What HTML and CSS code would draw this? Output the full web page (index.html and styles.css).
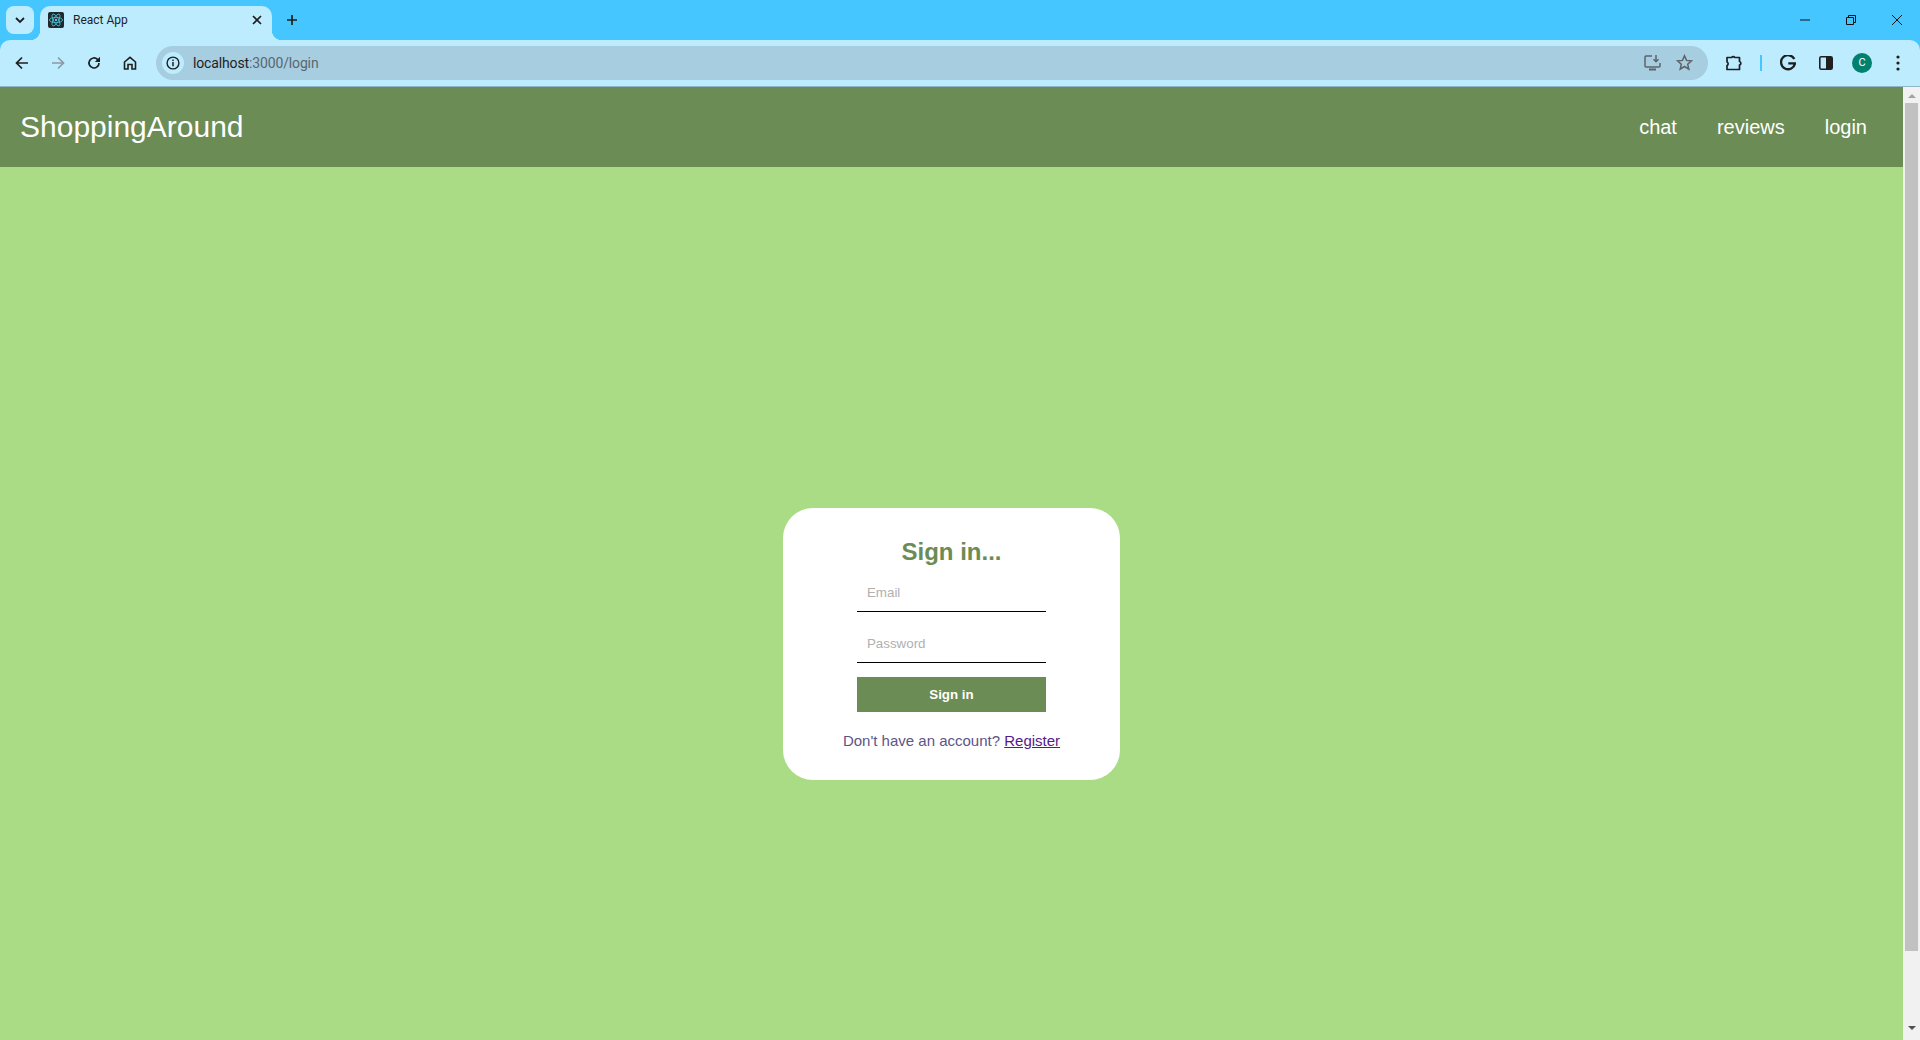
FILE: index.html
```html
<!DOCTYPE html>
<html lang="en">
  <head>
    <meta charset="UTF-8" />
    <meta name="viewport" content="width=device-width, initial-scale=1.0" />
    <title>React App</title>
    <link rel="stylesheet" href="styles.css">
  </head>
  <body>
    <!-- browser tab strip -->
    <div class="tabstrip">
      <div class="tab-search">
        <svg width="12" height="12" viewBox="0 0 12 12"><path d="M2 4l4 4 4-4" fill="none" stroke="#1f1f1f" stroke-width="1.8"/></svg>
      </div>
      <div class="tab">
        <span class="favicon">
          <svg width="16" height="16" viewBox="0 0 16 16">
            <rect width="16" height="16" rx="2" fill="#20282c"/>
            <g fill="none" stroke="#4fc6e0" stroke-width=".8">
              <ellipse cx="8" cy="8" rx="6.6" ry="2.6"/>
              <ellipse cx="8" cy="8" rx="6.6" ry="2.6" transform="rotate(60 8 8)"/>
              <ellipse cx="8" cy="8" rx="6.6" ry="2.6" transform="rotate(120 8 8)"/>
            </g>
            <circle cx="8" cy="8" r="1.3" fill="#4fc6e0"/>
          </svg>
        </span>
        <span class="tab-title">React App</span>
        <svg class="tab-close" width="10" height="10" viewBox="0 0 10 10"><path d="M1 1l8 8M9 1l-8 8" stroke="#1f1f1f" stroke-width="1.7"/></svg>
      </div>
      <svg class="new-tab" width="12" height="12" viewBox="0 0 12 12"><path d="M6 1v10M1 6h10" stroke="#1f1f1f" stroke-width="1.7"/></svg>
      <div class="window-controls">
        <svg width="10" height="10" viewBox="0 0 10 10"><path d="M0 5h10" stroke="#111" stroke-width="1"/></svg>
        <svg width="10" height="10" viewBox="0 0 10 10"><path d="M.5 2.5h7v7h-7zM2.5 2.5v-2h7v7h-2" fill="none" stroke="#111" stroke-width="1"/></svg>
        <svg width="10" height="10" viewBox="0 0 10 10"><path d="M0 0l10 10M10 0l-10 10" stroke="#111" stroke-width="1"/></svg>
      </div>
    </div>

    <!-- browser toolbar -->
    <div class="toolbar">
      <div class="nav-icons">
        <svg width="14" height="14" viewBox="0 0 14 14"><path d="M13 7H2M7 1.5L1.5 7 7 12.5" fill="none" stroke="#1f1f1f" stroke-width="1.7"/></svg>
        <svg width="14" height="14" viewBox="0 0 14 14"><path d="M1 7h11M7 1.5L12.5 7 7 12.5" fill="none" stroke="#8a9aa5" stroke-width="1.7"/></svg>
        <svg width="14" height="14" viewBox="0 0 14 14"><path d="M12 7a5 5 0 1 1-1.5-3.6L12.5 5" fill="none" stroke="#1f1f1f" stroke-width="1.7"/><path d="M13 .8V6H7.8z" fill="#1f1f1f"/></svg>
        <svg width="14" height="14" viewBox="0 0 14 14"><path d="M1.5 13V6L7 1.3 12.5 6v7H9V8.5H5V13z" fill="none" stroke="#1f1f1f" stroke-width="1.6"/></svg>
      </div>
      <div class="address-bar">
        <span class="site-info">
          <svg width="14" height="14" viewBox="0 0 14 14"><circle cx="7" cy="7" r="5.9" fill="none" stroke="#1f1f1f" stroke-width="1.4"/><path d="M7 6v4.2M7 3.6v1.4" stroke="#1f1f1f" stroke-width="1.5"/></svg>
        </span>
        <span class="url"><span class="url-host">localhost</span>:3000/login</span>
        <svg class="bar-icon" width="17" height="17" viewBox="0 0 17 17"><path d="M8 2H2a1 1 0 0 0-1 1v9a1 1 0 0 0 1 1h13a1 1 0 0 0 1-1V9" fill="none" stroke="#5f6368" stroke-width="1.5"/><path d="M12 1v6.5M9.5 5.2L12 7.7l2.5-2.5" fill="none" stroke="#5f6368" stroke-width="1.5"/><path d="M5 15.5h7" stroke="#5f6368" stroke-width="2"/></svg>
        <svg class="bar-icon" width="17" height="17" viewBox="0 0 17 17"><path d="M8.5 1.8l2 4.6 5 .5-3.8 3.3 1.1 4.9-4.3-2.6-4.3 2.6 1.1-4.9L1.500 6.900l5-.5z" fill="none" stroke="#5f6368" stroke-width="1.5"/></svg>
      </div>
      <div class="toolbar-actions">
        <svg class="icon-extensions" width="18" height="18" viewBox="0 0 18 18"><path d="M2 3.500h4.700a1.900 1.900 0 0 1 3.100 0h4.700v4a1.800 1.800 0 0 1 0 3.500v4.500H2v-4c1.500-.5 1.500-3 0-3.500z" fill="none" stroke="#1f1f1f" stroke-width="1.700" stroke-linejoin="round"/></svg>
        <span class="toolbar-sep"></span>
        <svg class="icon-google" width="16" height="16" viewBox="0 0 16 16"><path d="M14.300 4A7 7 0 1 0 15 8.300H8.300" fill="none" stroke="#1f1f1f" stroke-width="2.300"/></svg>
        <svg class="icon-panel" width="14" height="14" viewBox="0 0 14 14"><rect x=".8" y=".8" width="12.400" height="12.400" rx="1.500" fill="none" stroke="#1f1f1f" stroke-width="1.600"/><rect x="7" y="1" width="6" height="12" fill="#1f1f1f"/></svg>
        <span class="avatar">C</span>
        <svg width="4" height="16" viewBox="0 0 4 16"><circle cx="2" cy="2" r="1.600" fill="#1f1f1f"/><circle cx="2" cy="8" r="1.600" fill="#1f1f1f"/><circle cx="2" cy="14" r="1.600" fill="#1f1f1f"/></svg>
      </div>
    </div>

    <div class="viewport">
      <div class="page">
        <nav class="navbar">
          <a class="brand" href="#">ShoppingAround</a>
          <div class="nav-links">
            <a href="#">chat</a>
            <a href="#">reviews</a>
            <a href="#">login</a>
          </div>
        </nav>

        <main class="main">
          <form class="login-card">
            <h2>Sign in...</h2>
            <input type="email" placeholder="Email" />
            <input type="password" placeholder="Password" />
            <button type="button">Sign in</button>
            <p class="register-text">Don't have an account? <a href="#">Register</a></p>
          </form>
        </main>
      </div>

      <div class="scrollbar">
        <span class="arrow-up"></span>
        <div class="thumb"></div>
        <span class="arrow-down"></span>
      </div>
    </div>
  </body>
</html>
```

FILE: styles.css
```css
* {
  box-sizing: border-box;
}

html,
body {
  height: 100%;
}

body {
  margin: 0;
  display: flex;
  flex-direction: column;
  overflow: hidden;
  font-family: "Liberation Sans", Arial, sans-serif;
  background-color: #46c6ff;
}

/* Browser chrome */
.tabstrip {
  height: 40px;
  flex: none;
  display: flex;
  align-items: flex-start;
  padding: 6px 0 0 6px;
}

.tab-search {
  width: 28px;
  height: 28px;
  margin-right: 6px;
  display: flex;
  align-items: center;
  justify-content: center;
  border-radius: 8px;
  background-color: #bdecff;
}

.tab {
  width: 232px;
  height: 34px;
  display: flex;
  align-items: center;
  padding: 0 10px 6px 8px;
  border-radius: 10px 10px 0 0;
  background-color: #bdecff;
  position: relative;
}

/* the little flares at the tab's bottom corners */
.tab::after {
  content: "";
  position: absolute;
  right: -10px;
  bottom: 0;
  width: 10px;
  height: 10px;
  background: radial-gradient(circle at 100% 0, transparent 10px, #bdecff 10.500px);
}

.tab::before {
  content: "";
  position: absolute;
  left: -10px;
  bottom: 0;
  width: 10px;
  height: 10px;
  background: radial-gradient(circle at 0 0, transparent 10px, #bdecff 10.500px);
}

.favicon {
  display: flex;
  margin-right: 9px;
}

.tab-title {
  flex: 1;
  font-family: Roboto, sans-serif;
  font-size: 12px;
  color: #1f1f1f;
}

.new-tab {
  margin: 8px 0 0 14px;
}

.window-controls {
  margin-left: auto;
  display: flex;
  gap: 36px;
  padding: 9px 18px 0 0;
}

.toolbar {
  height: 47px;
  flex: none;
  display: flex;
  align-items: center;
  padding: 0 0 1px 0;
  border-bottom: 1px solid #8fb5c9;
  border-radius: 10px 10px 0 0;
  background-color: #bdecff;
}

.nav-icons {
  display: flex;
  gap: 22px;
  width: 156px;
  padding-left: 15px;
}

.address-bar {
  width: 1552px;
  height: 34px;
  display: flex;
  align-items: center;
  padding: 0 15px 0 6px;
  border-radius: 17px;
  background-color: #a6cde0;
}

.site-info {
  width: 22px;
  height: 22px;
  margin-right: 9px;
  display: flex;
  align-items: center;
  justify-content: center;
  border-radius: 50%;
  background-color: #bdecff;
}

.url {
  flex: 1;
  font-family: Roboto, sans-serif;
  font-size: 14px;
  letter-spacing: -0.14px;
  color: #5b6670;
}

.url-host {
  color: #1f1f1f;
}

.bar-icon {
  margin-left: 15px;
}

.toolbar-actions {
  flex: 1;
  display: flex;
  align-items: center;
  padding-left: 17px;
}

.toolbar-sep {
  width: 2px;
  height: 16px;
  margin: 0 18px 0 17px;
  background-color: #46c6ff;
}

.icon-google {
  margin-right: 23px;
}

.avatar {
  width: 20px;
  height: 20px;
  margin: 0 24px 0 19px;
  display: flex;
  align-items: center;
  justify-content: center;
  border-radius: 50%;
  font-family: Roboto, sans-serif;
  font-size: 11px;
  color: #fff;
  background-color: #00806e;
}

/* Page */
.viewport {
  flex: 1;
  display: flex;
  min-height: 0;
  overflow: hidden;
}

.page {
  flex: 1;
  min-width: 0;
  overflow: hidden;
}

.navbar {
  height: 80px;
  display: flex;
  align-items: center;
  justify-content: space-between;
  padding: 0 36px 0 20px;
  background-color: #6b8c55;
}

.navbar a {
  color: white;
  text-decoration: none;
}

.brand {
  font-size: 30px;
}

.nav-links {
  display: flex;
  gap: 40px;
  font-size: 20px;
}

.main {
  height: 954px;
  display: flex;
  align-items: center;
  justify-content: center;
  background-color: #a9dc84;
}

.login-card {
  display: flex;
  flex-direction: column;
  align-items: center;
  padding: 30px 60px;
  border-radius: 30px;
  background-color: white;
}

.login-card h2 {
  margin: 0 0 10px;
  font-size: 24px;
  line-height: 27px;
  color: #6b8c55;
}

.login-card input {
  display: block;
  width: 189px;
  height: 37px;
  margin-bottom: 14px;
  padding: 0 10px 2px;
  border: none;
  border-bottom: 1px solid black;
  outline: none;
  font-family: "Liberation Sans", Arial, sans-serif;
  font-size: 13.333px;
}

.login-card input::placeholder {
  color: #b0b0b0;
}

.login-card button {
  width: 189px;
  height: 35px;
  border: none;
  font-family: "Liberation Sans", Arial, sans-serif;
  font-size: 13.333px;
  font-weight: bold;
  color: white;
  background-color: #6b8c55;
  cursor: pointer;
}

.register-text {
  margin: 20px 0 0;
  font-size: 15px;
  line-height: 18px;
  white-space: nowrap;
  color: #5b5586;
}

.register-text a {
  color: #551a8b;
}

/* Fake page scrollbar */
.scrollbar {
  width: 17px;
  flex: none;
  display: flex;
  flex-direction: column;
  align-items: center;
  background-color: #f1f1f1;
}

.arrow-up,
.arrow-down {
  width: 0;
  height: 0;
  border-left: 4px solid transparent;
  border-right: 4px solid transparent;
}

.arrow-up {
  margin: 7px 0 5px;
  border-bottom: 4px solid #a3a3a3;
}

.arrow-down {
  margin-top: 75px;
  border-top: 4px solid #505050;
}

.thumb {
  width: 13px;
  height: 848px;
  background-color: #c1c1c1;
}
```
